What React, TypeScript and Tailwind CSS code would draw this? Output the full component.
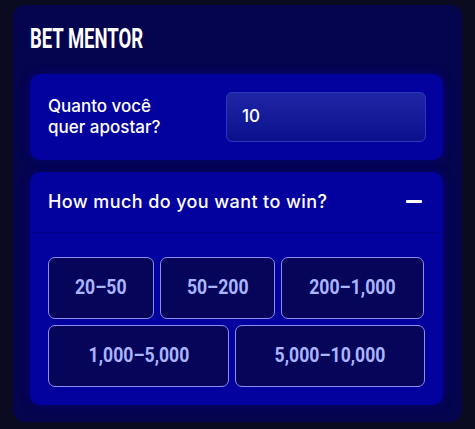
import React from "react";

const ranges: { label: string; w: string }[][] = [
  [
    { label: "20–50", w: "w-[106px]" },
    { label: "50–200", w: "w-[115px]" },
    { label: "200–1,000", w: "w-[143px]" },
  ],
  [
    { label: "1,000–5,000", w: "w-[181px]" },
    { label: "5,000–10,000", w: "w-[190px]" },
  ],
];

function RangeButton({ label, w }: { label: string; w: string }) {
  return (
    <button
      className={`${w} h-[62px] shrink-0 rounded-[7px] border border-[#8c8ff0] bg-[#070559] flex items-center justify-center`}
    >
      <span
        className="inline-block scale-x-[0.84] text-[21px] font-bold text-[#a9b5ff]"
        style={{ fontFamily: "Roboto, 'Liberation Sans', sans-serif" }}
      >
        {label}
      </span>
    </button>
  );
}

export default function App() {
  return (
    <div
      className="min-h-[429px] w-[475px] bg-[#0a0b20] pl-[13px] pt-[5px]"
      style={{ fontFamily: "Inter, 'Noto Sans', sans-serif" }}
    >
      <div className="w-[449px] h-[417px] rounded-[12px] bg-[#05044f] pl-[17px] pr-[19px] pt-[17px] flex flex-col">
        <h1
          className="inline-block origin-left scale-x-[0.66] text-[28px] leading-[34px] font-bold text-white whitespace-nowrap"
          style={{ fontFamily: "Roboto, 'Liberation Sans', sans-serif" }}
        >
          BET MENTOR
        </h1>

        <div className="mt-[18px] h-[86px] rounded-[10px] bg-[#03029e] shadow-[0_0_10px_rgba(3,2,158,0.5)] pl-[18px] pr-[17px] flex items-center justify-between">
          <p className="text-[17px] leading-[21px] font-medium text-white">
            Quanto você
            <br />
            quer apostar?
          </p>
          <div className="w-[200px] h-[50px] rounded-[6px] border border-[#2b37bd] bg-gradient-to-b from-[#1e26a6] to-[#0b108d] flex items-center pl-[15px]">
            <span className="text-[17px] font-medium text-white">10</span>
          </div>
        </div>

        <div className="mt-[12px] h-[233px] rounded-[10px] bg-[#03029e] shadow-[0_0_10px_rgba(3,2,158,0.5)] flex flex-col">
          <div className="h-[60px] flex items-center justify-between pl-[18px] pr-[21px] border-b border-[#0302a0] shadow-[0_1px_0_rgba(0,0,90,0.35)]">
            <span className="text-[18px] tracking-[0.4px] font-medium text-white">
              How much do you want to win?
            </span>
            <span className="block w-[16px] h-[3px] rounded-[1px] bg-white" />
          </div>
          <div className="px-[18px] pt-[25px] flex flex-col gap-[6px]">
            {ranges.map((row, i) => (
              <div key={i} className="flex gap-[6px]">
                {row.map((r) => (
                  <RangeButton key={r.label} label={r.label} w={r.w} />
                ))}
              </div>
            ))}
          </div>
        </div>
      </div>
    </div>
  );
}
